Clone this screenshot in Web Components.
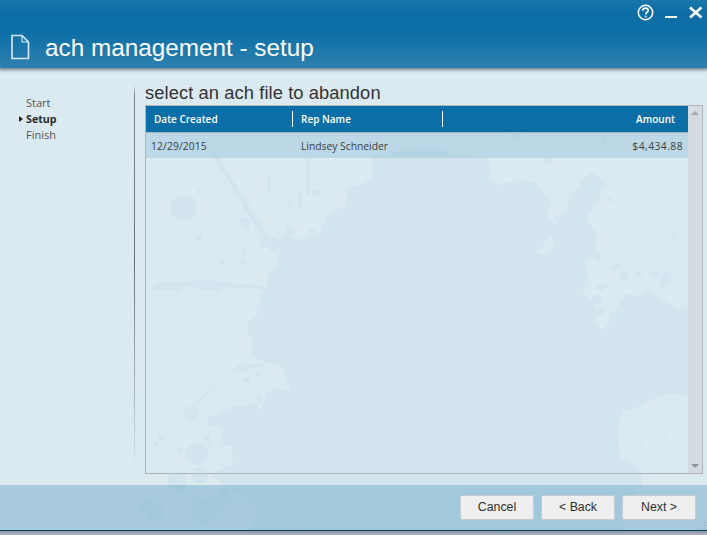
<!DOCTYPE html>
<html><head><meta charset="utf-8"><style>
html,body{margin:0;padding:0;background:#b5bcc1;overflow:hidden}
</style></head><body>
<ach-app>
  <ach-header slot="header" title-text="ach management - setup"></ach-header>
  <ach-steps slot="side"><ach-step>Start</ach-step><ach-step current>Setup</ach-step><ach-step>Finish</ach-step></ach-steps>
  <span slot="heading">select an ach file to abandon</span>
  <ach-grid slot="grid"></ach-grid>
  <ach-button slot="actions">Cancel</ach-button>
  <ach-button slot="actions">&lt; Back</ach-button>
  <ach-button slot="actions">Next &gt;</ach-button>
</ach-app>
<script>
const UI='"Open Sans","Noto Sans",sans-serif';
const HEAD='"Liberation Sans",Arial,sans-serif';
function def(name,css,html,setup){
  customElements.define(name,class extends HTMLElement{
    constructor(){super();const r=this.attachShadow({mode:'open'});r.innerHTML='<style>'+css+'</style>'+html;}
    connectedCallback(){if(setup)setup(this);}
  });
}
const circ=a=>a.map(c=>`<circle cx="${c[0]}" cy="${c[1]}" r="${c[2]}"/>`).join('');
const splat=`<svg width="707" height="535" viewBox="0 0 707 535" xmlns="http://www.w3.org/2000/svg" fill="#d2e4ed" stroke="none">
<defs><filter id="rough" x="0" y="0" width="100%" height="100%" filterUnits="objectBoundingBox"><feTurbulence type="fractalNoise" baseFrequency="0.07" numOctaves="2" seed="4" result="n"/><feDisplacementMap in="SourceGraphic" in2="n" scale="7"/></filter></defs>
<g filter="url(#rough)">
<path stroke="#d2e4ed" stroke-width="3" stroke-linejoin="round" d="M372 158L395 152L420 148L445 152L456 157L487 158L487 180L500 187L523 182L537 185L548 202L547 218L557 227L548 237L533 253L545 258L558 245L550 233L558 227L558 217L568 215L568 200L583 183L593 175L603 182L597 200L585 220L595 233L592 253L585 263L587 280L580 293L593 303L593 322L602 333L612 322L627 298L650 294L677 310L702 300L702 396L672 392L653 397L623 410L617 430L620 460L640 470L640 483L620 530L252 530L258 510L250 500L230 486L215 477L233 463L235 443L222 447L224 432L216 418L230 407L256 404L266 422L266 392L292 390L284 366L257 357L252 340L248 322L258 318L260 298L268 288L272 274L278 262L282 240L292 238L305 243L318 232L328 218L346 208L350 192L362 184L374 178Z"/>
<path d="M192 493L204 500L220 494L226 488L232 500L220 513L206 526L195 523L192 510ZM145 505L158 500L165 515L148 525Z"/>
<path d="M150 286C180 278 220 280 235 283C240 285 260 285 264 286L264 289L225 288L218 291L190 287L155 291Z"/>
</g>
<path d="M212 155L216 153L273 243L277 250L271 252L255 226Z"/>
<path d="M256 350L257 351L195 405L194 404Z" />
<path d="M236 366L262 363L264 366L238 370Z"/>
<path d="M267 175L268 190L271 190L271 175ZM288 165L287 190L289 190ZM307 158L306 195L309 195L310 158ZM299 190L298 208L301 208L302 190ZM289 195L288 210L293 205Z"/>
${circ([[183,208,13],[199,192,2.5],[199,238,3.5],[245,222,5],[256,219,2],[316,193,4],[275,243,6],[290,231,4],[286,238,5],[312,231,3],[304,243,3],[264,243,4],[246,225,3],[279,232,2],
[244,253,2],[243,262,3],[222,262,2],
[285,362,4],[245,370,3],[247,380,3],[258,374,2],[259,398,3],[258,411,3],[191,413,7],[213,421,6],[161,438,3],[207,438,3],[210,445,2],[179,450,2],[197,454,11],[177,481,10],[200,475,8],[181,488,4],[146,506,6],[156,444,2],
[597,257,4],[610,199,2],[611,201,2],[597,300,5],[601,287,4],[624,276,4],[639,273,3],[656,275,3],[652,274,2],[606,286,2],[590,314,7],[600,311,4],[615,318,6],[620,320,6],[670,274,2],
[515,133,7],[548,144,2],[548,161,4],[604,139,3]])}
<path d="M613 265L622 263L616 270L610 270ZM674 233L676 232L671 245L670 244Z"/>
<path d="M658 285L666 270L672 274L664 288Z"/>
<path d="M636 443L650 434L640 444ZM662 436L667 430L664 440ZM660 462L670 460L662 466Z" fill="#d5e5ee"/>
</svg>`;
def('ach-splatter',':host{position:absolute;left:0;top:0;width:707px;height:535px;display:block;pointer-events:none}svg{display:block}',splat);

def('ach-app',`
:host{display:flex;flex-direction:column;position:relative;width:707px;height:535px;overflow:hidden;background:#b5bcc1;font-family:${UI}}
.stage{position:relative;display:flex;flex-direction:column;flex:1;height:530px;background:#dbe9f0;overflow:hidden}
.body{position:relative;display:flex;height:417px}
.side{width:134px;box-sizing:border-box;padding-top:27px}
.rule{width:1px;margin-top:17px;height:390px;background:linear-gradient(#dbe9f0 0,#7d8589 10px,#6a7277 45%,#b9c6cd 85%,#dbe9f0 100%)}
.main{flex:1;padding:13px 4px 11px 10px;display:flex;flex-direction:column;min-width:0}
.heading{font:18.3px/24px ${HEAD};letter-spacing:.1px;color:#333;height:24px;white-space:nowrap}
.gridwrap{flex:1;display:flex;min-height:0}
::slotted(ach-grid){flex:1}
.footer{position:relative;height:45px;background:rgba(61,142,182,.33);display:flex;justify-content:flex-end;align-items:flex-start;gap:7px;padding:10px 11px 0 0;box-sizing:border-box}
.grip{position:absolute;right:0;bottom:1px;width:12px;height:10px;background:
 radial-gradient(circle at .5px .5px,#8ea9b8 .7px,transparent .8px) 0 0/3px 3px;clip-path:polygon(100% 0,100% 100%,0 100%)}
.edge{height:5px;background:linear-gradient(#0b3b5a 0 1px,#8b99a3 1px,#aeb6bb 100%)}
`,`
<div class="stage">
  <ach-splatter></ach-splatter>
  <slot name="header"></slot>
  <div class="body">
    <div class="side"><slot name="side"></slot></div>
    <div class="rule"></div>
    <div class="main">
      <div class="heading"><slot name="heading"></slot></div>
      <div class="gridwrap"><slot name="grid"></slot></div>
    </div>
  </div>
  <div class="footer"><slot name="actions"></slot><div class="grip"></div></div>
</div>
<div class="edge"></div>`);

def('ach-header',`
:host{display:block;position:relative;z-index:2;height:68px;background:linear-gradient(#1a76ab 0,#0d6ea6 12px,#0d6fa7 32px,#2e81af 68px);box-shadow:0 1px 3px 1px rgba(40,50,55,.55);color:#fff}
.controls{display:flex;justify-content:flex-end;align-items:flex-start;height:31px;padding:3px 4px 0 0;box-sizing:border-box}
.title{display:flex;align-items:center;height:34px}
.doc{margin:-3px 0 0 10px;width:20px;height:26px;display:block}
h1{margin:0 0 0 15px;font:400 24.3px/28px ${HEAD};color:#fff;white-space:nowrap}
svg{display:block}
`,`
<div class="controls">
<svg width="68" height="18" viewBox="0 0 68 18" fill="none" stroke="#fff">
 <circle cx="10.5" cy="9.500" r="7.200" stroke-width="1.5"/>
 <path d="M7.8 7.7C7.8 5.9 9.1 5.1 10.5 5.1C12 5.1 13.2 6 13.2 7.4C13.2 9.2 10.7 9.4 10.7 11.400" stroke-width="1.6"/>
 <path d="M10.7 12.700V14.400" stroke-width="1.7"/>
 <path d="M30 14H42" stroke-width="2"/>
 <path d="M55 4.500L66.500 14.500M66.500 4.500L55 14.500" stroke-width="2.6"/>
</svg></div>
<div class="title">
<svg class="doc" viewBox="0 0 20 26" fill="none"><path d="M2 1.5H12L18.500 8V24.500H2Z" stroke="#d4e6f1" stroke-width="1.7"/><path d="M12 1.500V8H18.500" stroke="#d4e6f1" stroke-width="1.200"/></svg>
<h1 id="t"></h1></div>`,el=>{el.shadowRoot.getElementById('t').textContent=el.getAttribute('title-text');});

def('ach-steps',':host{display:flex;flex-direction:column;padding-left:26px}','<slot></slot>');
def('ach-step',`
:host{display:block;position:relative;height:16px;font:11px/16px ${UI};color:#555}
:host([current]){font-weight:700;color:#2a2a2a;font-size:10.7px}
:host([current])::before{content:"";position:absolute;left:-7px;top:5px;border-left:4px solid #222;border-top:3.5px solid transparent;border-bottom:3.5px solid transparent}
`,'<slot></slot>');

def('ach-button',`
:host{display:block;width:74px;height:25px;box-sizing:border-box;background:#efefef;border:1px solid #c3ccd2;border-radius:2px;font:12.3px/23px ${HEAD};color:#2e2e2e;text-align:center}
`,'<slot></slot>');

def('ach-grid',`
:host{display:flex;box-sizing:border-box;border:1px solid #b1b5b7;min-width:0}
.table{flex:1;min-width:0;display:flex;flex-direction:column}
.cols{display:grid;grid-template-columns:146px 150px 1fr}
.head{height:26px;background:#0c6ea6;border-bottom:1px solid #a9b4ba;color:#fff;font:600 10px/26px ${UI};align-items:center}
.head div{padding-left:8px;height:16px;line-height:16px;box-sizing:border-box}
.head div+div{border-left:1px solid #fff}
.head div:last-child{text-align:right;padding-right:13px}
.row{height:25px;background:rgba(117,177,207,.3);font:10.3px/27px ${UI};color:#3a3f42}
.row div{padding-left:5px;letter-spacing:.12px}
.row div+div{padding-left:9px;letter-spacing:0}
.row div:last-child{text-align:right;padding-right:5px;letter-spacing:.45px}
.bar{width:14px;flex:none;background:#d5dce1;position:relative}
.up,.down{position:absolute;left:3px;width:0;height:0;border-left:4px solid transparent;border-right:4px solid transparent}
.up{top:5px;border-bottom:4px solid #a2a8ac}
.down{bottom:5px;border-top:4px solid #8f9599}
`,`
<div class="table">
  <div class="cols head"><div>Date Created</div><div>Rep Name</div><div>Amount</div></div>
  <div class="cols row"><div>12/29/2015</div><div>Lindsey Schneider</div><div>$4,434.88</div></div>
</div>
<div class="bar"><div class="up"></div><div class="down"></div></div>`);
</script>
</body></html>
